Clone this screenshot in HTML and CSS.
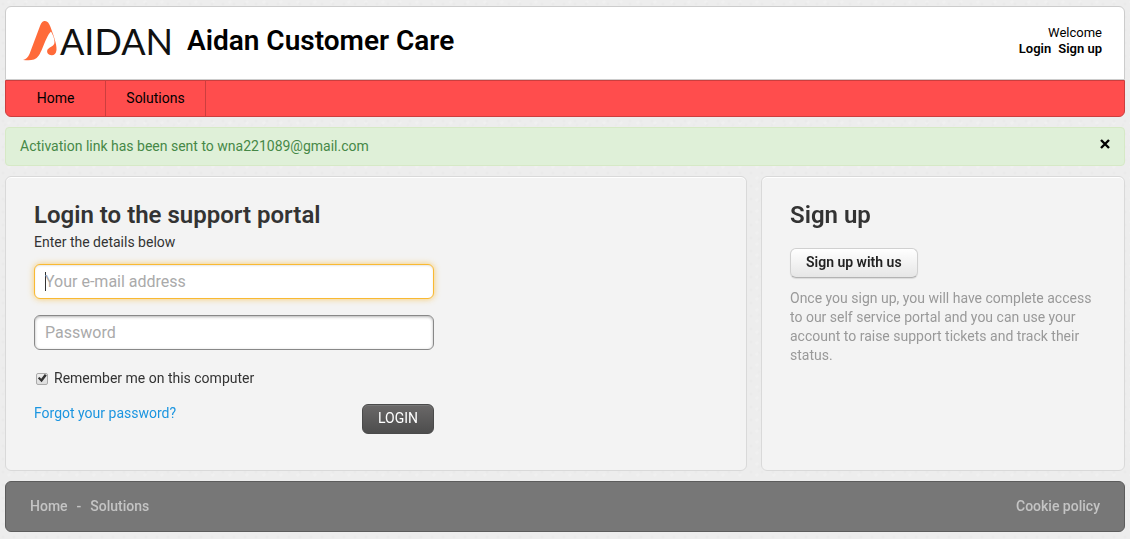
FILE: index.html
```html
<!DOCTYPE html>
<html lang="en">
<head>
    <meta charset="UTF-8">
    <meta name="viewport" content="width=device-width, initial-scale=1.0">
    <title>Aidan Customer Care</title>
    <link rel="stylesheet" href="styles.css">
</head>
<body>
    <header class="header">
        <div class="banner">
            <a class="brand" href="#">
                <svg class="brand-mark" viewBox="0 0 34 40" aria-hidden="true">
                    <path d="M0 39 C3 38.500 5 36 6.500 33 L17 5 C18.500 1 20 0 22 0 C24.500 0 26 2 27.500 6 C30 13 34 23 33.500 29 C33 33 31 34.500 28.500 34.300 C25.500 34 23.700 32 24.200 29.500 C25 26 31.500 26 31.500 21 C31.500 17 29.500 13 28 10.500 C25 13 22 21 19.500 27 C17 33 15 37 11 38.500 C8 39.500 4 39.200 0 39 Z" fill="#ff6a39"/>
                </svg>
                <span class="brand-name">AIDAN</span>
            </a>
            <h1 class="portal-name">Aidan Customer Care</h1>
            <div class="welcome">
                <div>Welcome</div>
                <div class="welcome-links"><a href="#">Login</a><a href="#">Sign up</a></div>
            </div>
        </div>
        <nav class="nav">
            <a href="#">Home</a>
            <a href="#">Solutions</a>
        </nav>
    </header>

    <div class="alert" role="status">
        <span>Activation link has been sent to wna221089@gmail.com</span>
        <button class="alert-close" type="button" aria-label="Close">
            <svg viewBox="0 0 10 10" width="10" height="10" aria-hidden="true"><path d="M1 1 L9 9 M9 1 L1 9" stroke="#000" stroke-width="2.400"/></svg>
        </button>
    </div>

    <main class="content">
        <section class="panel login">
            <h2>Login to the support portal</h2>
            <p class="lead">Enter the details below</p>
            <form class="login-form">
                <input class="field" type="email" aria-label="Your e-mail address" placeholder="Your e-mail address" autofocus>
                <input class="field" type="password" aria-label="Password" placeholder="Password">
                <div class="remember">
                    <input type="checkbox" id="remember" checked>
                    <label for="remember">Remember me on this computer</label>
                </div>
                <div class="actions">
                    <a href="#">Forgot your password?</a>
                    <button class="btn btn-dark" type="submit">LOGIN</button>
                </div>
            </form>
        </section>

        <section class="panel signup">
            <h2>Sign up</h2>
            <button class="btn btn-light" type="button">Sign up with us</button>
            <p class="hint">Once you sign up, you will have complete access to our self service portal and you can use your account to raise support tickets and track their status.</p>
        </section>
    </main>

    <footer class="footer">
        <div class="footer-links"><a href="#">Home</a><span>-</span><a href="#">Solutions</a></div>
        <a href="#">Cookie policy</a>
    </footer>
</body>
</html>
```
FILE: styles.css
```css
* {
    box-sizing: border-box;
}

body {
    margin: 0;
    padding: 6px 5px;
    display: flex;
    flex-direction: column;
    gap: 10px;
    font-family: Roboto, "Liberation Sans", sans-serif;
    font-size: 14px;
    line-height: 19px;
    color: #333;
    /* paper grain */
    background-color: #ededed;
    background-image:
        radial-gradient(circle at 3px 4px, #eaeaea 1px, transparent 2px),
        radial-gradient(circle at 9px 2px, #f0f0f0 1px, transparent 2px),
        radial-gradient(circle at 5px 11px, #ebebeb 1px, transparent 2px);
    background-size: 11px 13px, 17px 11px, 13px 19px;
}

h1, h2, p {
    margin: 0;
}

a {
    color: inherit;
    text-decoration: none;
}

button, input {
    font-family: inherit;
}

/* Header */
.banner {
    display: flex;
    align-items: center;
    min-height: 74px;
    padding: 0 22px 4px 17px;
    background: #fff;
    border: 1px solid #ccc;
    border-radius: 6px 6px 0 0;
}

.brand {
    display: flex;
    align-items: center;
    gap: 3px;
}

.brand-mark {
    width: 34px;
    height: 40px;
}

.brand-name {
    font-family: Lato, sans-serif;
    font-size: 36px;
    line-height: 40px;
    color: #111;
}

.portal-name {
    margin-left: 14px;
    font-size: 28px;
    line-height: 34px;
    font-weight: 600;
    color: #000;
}

.welcome {
    margin-left: auto;
    font-size: 13px;
    line-height: 16px;
    text-align: right;
    color: #000;
}

.welcome-links {
    display: flex;
    gap: 7px;
    font-weight: 600;
}

.nav {
    display: flex;
    min-height: 37px;
    background: #ff4d4d;
    border: 1px solid #cc3e3e;
    border-radius: 0 0 6px 6px;
    color: #000;
}

.nav a {
    min-width: 100px;
    padding: 8px 20px;
    text-align: center;
    border-right: 1px solid #cc3e3e;
}

/* Notice */
.alert {
    display: flex;
    justify-content: space-between;
    align-items: flex-start;
    padding: 9px 14px;
    background: #dff0d8;
    border: 1px solid #d6e9c6;
    border-radius: 4px;
    color: #468847;
}

.alert-close {
    display: flex;
    padding: 2px 0;
    background: none;
    border: 0;
    cursor: pointer;
}

/* Panels */
.content {
    display: flex;
    gap: 14px;
}

.panel {
    min-height: 295px;
    padding: 23px 28px;
    background: #f3f3f3;
    border: 1px solid #d9d9d9;
    border-radius: 6px;
    box-shadow: inset 0 1px 0 #fff;
}

.login {
    flex: 1;
}

.signup {
    flex: 0 0 364px;
}

.panel h2 {
    font-size: 24px;
    line-height: 30px;
    font-weight: 600;
}

.lead {
    margin-top: 3px;
}

.login-form {
    display: flex;
    flex-direction: column;
    max-width: 400px;
    margin-top: 12px;
}

.field {
    height: 35px;
    margin-bottom: 16px;
    padding: 0 10px;
    font-size: 16px;
    color: #333;
    background: #fff;
    border: 1px solid #888;
    border-radius: 6px;
    box-shadow: inset 0 1px 3px rgba(0, 0, 0, 0.3);
    outline: none;
}

.field::placeholder {
    color: #aaa;
}

.field:focus {
    border-color: #f9b932;
    box-shadow: inset 0 1px 2px rgba(0, 0, 0, 0.1), 0 0 6px rgba(249, 185, 50, 0.7);
}

/* steady caret while the field is empty */
.field:focus:placeholder-shown {
    caret-color: transparent;
    background: linear-gradient(#333, #333) 10px center / 1px 19px no-repeat #fff;
}

.remember {
    display: flex;
    align-items: center;
    gap: 6px;
    padding: 3px 2px;
}

.remember input {
    appearance: none;
    width: 12px;
    height: 12px;
    margin: 0;
    background: linear-gradient(#eee, #ddd);
    border: 1px solid #aaa;
    border-radius: 2px;
}

.remember input:checked::before {
    content: "";
    display: block;
    width: 10px;
    height: 10px;
    background: #333;
    clip-path: polygon(8% 48%, 26% 34%, 42% 52%, 78% 6%, 98% 20%, 46% 88%);
}

.actions {
    display: flex;
    justify-content: space-between;
    align-items: flex-start;
    margin-top: 13px;
}

.actions a {
    color: #1b95e0;
}

.btn {
    height: 30px;
    padding: 0 15px 2px;
    font-size: 14px;
    line-height: 26px;
    border-radius: 6px;
    cursor: pointer;
}

.btn-dark {
    color: #fff;
    background: linear-gradient(#6a6868, #4d4d4d);
    border: 1px solid #4a4a4a;
    box-shadow: inset 0 1px 0 #777;
}

.btn-light {
    margin-top: 18px;
    font-weight: 600;
    color: #222;
    background: linear-gradient(#fff, #e6e6e6);
    border: 1px solid #d0d0d0;
    border-bottom-color: #b3b3b3;
    box-shadow: 0 1px 1px rgba(0, 0, 0, 0.1);
}

.hint {
    margin-top: 11px;
    color: #999;
}

/* Footer */
.footer {
    display: flex;
    justify-content: space-between;
    align-items: center;
    min-height: 51px;
    padding: 0 24px;
    background: #777;
    border: 1px solid #5c5c5c;
    border-radius: 6px;
    color: #c4c4c4;
    font-weight: 500;
}

.footer-links {
    display: flex;
    gap: 9px;
}
```
